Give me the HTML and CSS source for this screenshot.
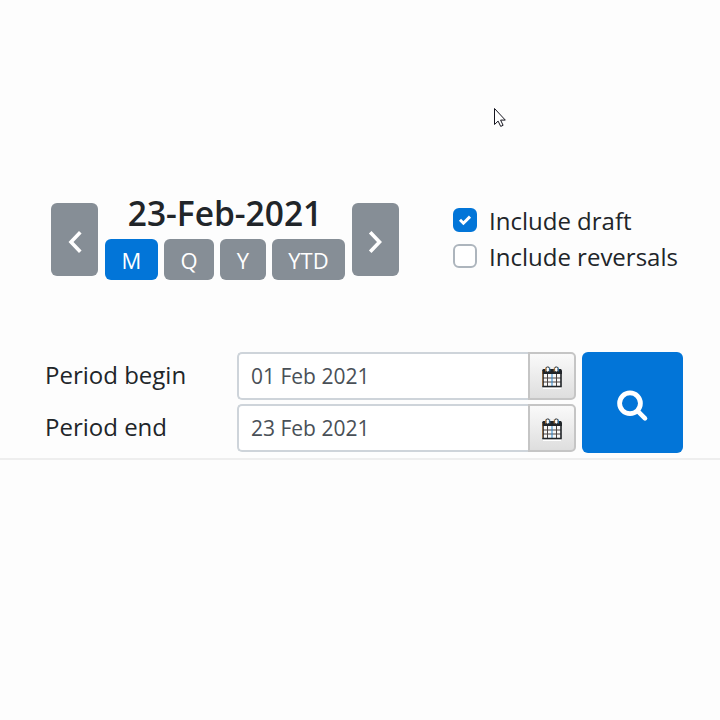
FILE: index.html
```html
<!DOCTYPE html>
<html lang="en">
<head>
  <meta charset="UTF-8" />
  <meta name="viewport" content="width=device-width, initial-scale=1.0"/>
  <title>Period selection</title>
  <link rel="stylesheet" href="styles.css">
</head>
<body>

<!-- Filter Panel -->
<section class="filter-panel">
  <div class="filter-top">
    <button class="btn btn-arrow" aria-label="Previous">
      <svg width="16" height="24" viewBox="0 0 16 24"><path d="M13.3 2.2 4 12l9.3 9.8" fill="none" stroke="#fff" stroke-width="3.6"/></svg>
    </button>
    <div class="period">
      <h1 class="period-title">23-Feb-2021</h1>
      <div class="period-buttons">
        <button class="btn btn-m active">M</button>
        <button class="btn btn-q">Q</button>
        <button class="btn btn-y">Y</button>
        <button class="btn btn-ytd">YTD</button>
      </div>
    </div>
    <button class="btn btn-arrow" aria-label="Next">
      <svg width="16" height="24" viewBox="0 0 16 24"><path d="M2.2 2.2 11.5 12l-9.3 9.8" fill="none" stroke="#fff" stroke-width="3.6"/></svg>
    </button>

    <div class="options">
      <label class="option">
        <span class="checkbox checked">
          <svg width="14" height="12" viewBox="0 0 14 12"><path d="M2 5.8 5.4 9.2 12 2.6" fill="none" stroke="#fff" stroke-width="3"/></svg>
        </span>
        <span>Include draft</span>
      </label>
      <label class="option">
        <span class="checkbox"></span>
        <span>Include reversals</span>
      </label>
    </div>
  </div>

  <div class="filter-dates">
    <div class="date-rows">
      <div class="date-row">
        <label class="date-label" for="begin">Period begin</label>
        <input class="date-input" id="begin" type="text" value="01 Feb 2021">
        <button class="date-button" aria-label="Pick begin date">
          <svg width="20" height="23" viewBox="0 0 20 23">
            <path d="M1 22.5h18" stroke="#fff"/>
            <path d="M0 4.5 1 3h18l1 1.5V8H0z" fill="#212529"/>
            <rect x="1" y="8" width="18" height="12.5" fill="#f8f8f8"/>
            <path d="M5.5 8v12M14.5 8v12M1 12h18M1 16h18" stroke="#4a4340"/>
            <path d="M10 8v12" stroke="#2a86cc"/>
            <path d="M1 8v12.5h18V8" fill="none" stroke="#212529" stroke-width="1.6"/>
            <path d="M.3 5v15" stroke="#d98a35" stroke-width=".6"/>
            <rect x="4" y="1" width="3.4" height="5" rx="1.4" fill="#fff" stroke="#212529"/>
            <rect x="12.6" y="1" width="3.4" height="5" rx="1.4" fill="#fff" stroke="#212529"/>
            <path d="M3.6 1.5v4M12.2 1.5v4" stroke="#d98a35" stroke-width=".8"/>
            <path d="M7.8 1.5v4M16.4 1.5v4" stroke="#2a86cc" stroke-width=".8"/>
          </svg>
        </button>
      </div>
      <div class="date-row">
        <label class="date-label" for="end">Period end</label>
        <input class="date-input" id="end" type="text" value="23 Feb 2021">
        <button class="date-button" aria-label="Pick end date">
          <svg width="20" height="23" viewBox="0 0 20 23">
            <path d="M1 22.5h18" stroke="#fff"/>
            <path d="M0 4.5 1 3h18l1 1.5V8H0z" fill="#212529"/>
            <rect x="1" y="8" width="18" height="12.5" fill="#f8f8f8"/>
            <path d="M5.5 8v12M14.5 8v12M1 12h18M1 16h18" stroke="#4a4340"/>
            <path d="M10 8v12" stroke="#2a86cc"/>
            <path d="M1 8v12.5h18V8" fill="none" stroke="#212529" stroke-width="1.6"/>
            <path d="M.3 5v15" stroke="#d98a35" stroke-width=".6"/>
            <rect x="4" y="1" width="3.4" height="5" rx="1.4" fill="#fff" stroke="#212529"/>
            <rect x="12.6" y="1" width="3.4" height="5" rx="1.4" fill="#fff" stroke="#212529"/>
            <path d="M3.6 1.5v4M12.2 1.5v4" stroke="#d98a35" stroke-width=".8"/>
            <path d="M7.8 1.5v4M16.4 1.5v4" stroke="#2a86cc" stroke-width=".8"/>
          </svg>
        </button>
      </div>
    </div>
    <button class="btn btn-search" aria-label="Search">
      <svg width="32" height="32" viewBox="0 0 32 32"><circle cx="13" cy="13.3" r="10.4" fill="none" stroke="#fff" stroke-width="4.8"/><path d="m21 21.3 7 7" stroke="#fff" stroke-width="4.6" stroke-linecap="round"/></svg>
    </button>
  </div>
</section>

<!-- Mouse pointer -->
<svg class="pointer" width="14" height="21" viewBox="0 0 14 21"><path d="M1.5 1.5v16l3.6-3.4 2.6 5.3 2.4-1.1-2.5-5.2h4.7z" fill="#fff" stroke="#15151f"/></svg>

</body>
</html>
```
FILE: styles.css
```css
body {
  margin: 0;
  font-family: 'Open Sans', sans-serif;
  font-size: 24px;
  background: #fdfdfd;
  color: #212529;
}

/* Filter Panel */
.filter-panel {
  height: 460px;
  padding-top: 203px;
  box-sizing: border-box;
  border-bottom: 2px solid #eee;
}

.filter-top {
  display: flex;
  height: 149px;
  padding-left: 51px;
  box-sizing: border-box;
  align-items: flex-start;
}

/* Buttons */
.btn {
  display: flex;
  align-items: center;
  justify-content: center;
  padding: 0;
  border: none;
  border-radius: 6px;
  background: #868e96;
  color: #fff;
  font-family: inherit;
  font-size: 22px;
  cursor: pointer;
}

.btn-arrow {
  width: 47px;
  height: 73px;
  padding-top: 5px;
}

/* Period */
.period {
  width: 240px;
  margin: 0 7px;
}

.period-title {
  height: 36px;
  margin: 0;
  font-size: 33.5px;
  font-weight: 600;
  line-height: 20px;
  text-align: center;
}

.period-buttons {
  display: flex;
  gap: 6px;
}

.period-buttons .btn {
  height: 41px;
  padding-top: 1px;
}

.period-buttons .active {
  background: #0275d8;
}

.btn-m {
  width: 53px;
}

.btn-q {
  width: 50px;
}

.btn-y {
  width: 46px;
}

.btn-ytd {
  width: 73px;
}

/* Checkboxes */
.options {
  margin: 5px 0 0 54px;
}

.option {
  display: flex;
  height: 36px;
  gap: 12px;
  line-height: 25px;
  white-space: nowrap;
}

.checkbox {
  display: flex;
  align-items: center;
  justify-content: center;
  width: 24px;
  height: 24px;
  box-sizing: border-box;
  border: 2px solid #adb5bd;
  border-radius: 6px;
  background: #fff;
}

.checked {
  border-color: #0275d8;
  background: #0275d8;
}

/* Dates */
.filter-dates {
  display: flex;
  gap: 6px;
  padding-left: 45px;
}

.date-rows {
  display: flex;
  flex-direction: column;
  gap: 4px;
}

.date-row {
  display: flex;
  height: 48px;
}

.date-label {
  width: 192px;
  line-height: 45px;
}

.date-input {
  width: 291px;
  padding: 0 0 0 12px;
  box-sizing: border-box;
  border: 2px solid #ced4da;
  border-right: none;
  border-radius: 5px 0 0 5px;
  background: #fff;
  color: #495057;
  font-family: inherit;
  font-size: 21px;
}

.date-button {
  display: flex;
  align-items: center;
  justify-content: center;
  width: 48px;
  padding: 2px 0 0;
  box-sizing: border-box;
  border: 2px solid #c5c5c5;
  border-radius: 0 5px 5px 0;
  background: linear-gradient(#fafafa, #dedede);
}

.btn-search {
  width: 101px;
  height: 101px;
  padding-top: 6px;
  background: #0275d8;
}

/* Pointer */
.pointer {
  position: absolute;
  left: 493px;
  top: 107px;
}
```
